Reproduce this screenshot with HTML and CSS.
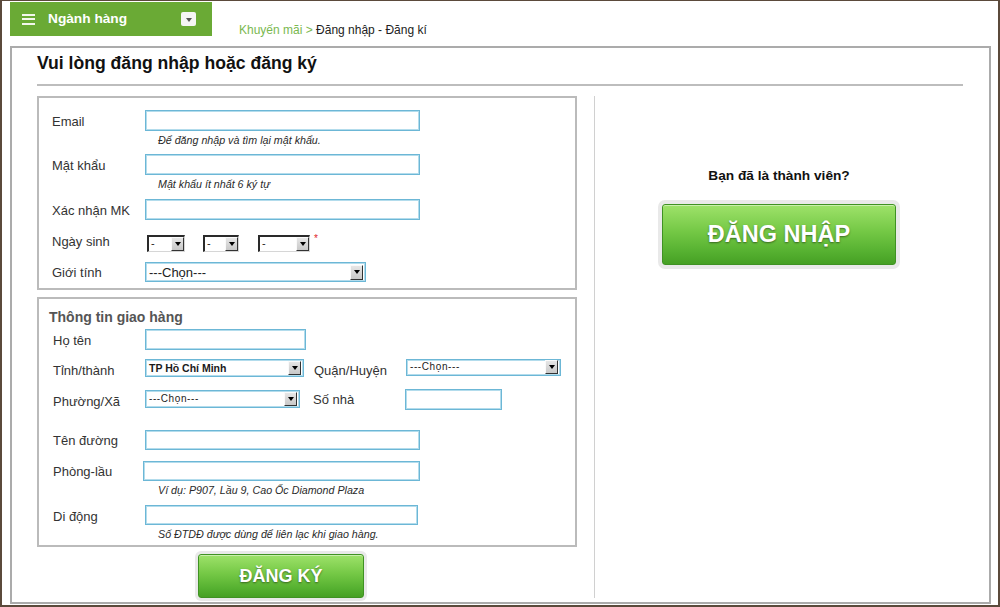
FILE: index.html
```html
<!DOCTYPE html>
<html lang="vi">
<head>
<meta charset="utf-8">
<title>Đăng nhập - Đăng kí</title>
<link rel="stylesheet" href="styles.css">
</head>
<body>
<div class="frame">
  <div class="topbar">
    <div class="cat">
      <span class="burger"><i></i><i></i><i></i></span>
      <span class="cat-title">Ngành hàng</span>
      <span class="cat-drop"></span>
    </div>
    <div class="crumb"><span class="crumb-link">Khuyến mãi &gt;</span> Đăng nhập - Đăng kí</div>
  </div>

  <div class="main">
    <h1 class="heading">Vui lòng đăng nhập hoặc đăng ký</h1>
    <div class="cols">
      <div class="left">
        <div class="box box-account">
          <div class="row">
            <label class="lbl">Email</label>
            <div class="inp w275"></div>
          </div>
          <div class="hint">Để đăng nhập và tìm lại mật khẩu.</div>
          <div class="row mt7">
            <label class="lbl">Mật khẩu</label>
            <div class="inp w275"></div>
          </div>
          <div class="hint">Mật khẩu ít nhất 6 ký tự</div>
          <div class="row mt8">
            <label class="lbl">Xác nhận MK</label>
            <div class="inp w275"></div>
          </div>
          <div class="row mt15">
            <label class="lbl lbl-up">Ngày sinh</label>
            <div class="dates">
              <div class="dsel w38"><span class="v">-</span><span class="arr"></span></div>
              <div class="dsel w36"><span class="v">-</span><span class="arr"></span></div>
              <div class="dsel w52"><span class="v">-</span><span class="arr"></span></div>
              <span class="req">*</span>
            </div>
          </div>
          <div class="row mt10">
            <label class="lbl">Giới tính</label>
            <div class="sel big w221"><span class="v">---Chọn---</span><span class="arr"></span></div>
          </div>
        </div>

        <div class="box box-ship">
          <div class="box-title">Thông tin giao hàng</div>
          <div class="row mt3">
            <label class="lbl">Họ tên</label>
            <div class="inp w161"></div>
          </div>
          <div class="row mt9 h18">
            <label class="lbl lbl-dn">Tỉnh/thành</label>
            <div class="sel small bold w159"><span class="v">TP Hồ Chí Minh</span><span class="arr"></span></div>
            <label class="lbl lbl-dn ml10">Quận/Huyện</label>
            <div class="sel small spaced w155 h17 up1"><span class="v">---Chọn---</span><span class="arr"></span></div>
          </div>
          <div class="row mt11">
            <label class="lbl lbl-dn">Phường/Xã</label>
            <div class="sel small spaced w155"><span class="v">---Chọn---</span><span class="arr"></span></div>
            <label class="lbl ml13">Số nhà</label>
            <div class="inp w97"></div>
          </div>
          <div class="row mt20">
            <label class="lbl">Tên đường</label>
            <div class="inp w275 h20"></div>
          </div>
          <div class="row mt11">
            <label class="lbl">Phòng-lầu</label>
            <div class="inp w277 h20 shift"></div>
          </div>
          <div class="hint">Ví dụ: P907, Lầu 9, Cao Ốc Diamond Plaza</div>
          <div class="row mt8">
            <label class="lbl lbl-dn1">Di động</label>
            <div class="inp w273 h20"></div>
          </div>
          <div class="hint">Số ĐTDĐ được dùng để liên lạc khi giao hàng.</div>
        </div>

        <div class="btn-wrap">
          <button class="btn btn-reg" type="button">ĐĂNG KÝ</button>
        </div>
      </div>

      <div class="right">
        <div class="member">Bạn đã là thành viên?</div>
        <button class="btn btn-login" type="button">ĐĂNG NHẬP</button>
      </div>
    </div>
  </div>
</div>
</body>
</html>
```
FILE: styles.css
```css
* { box-sizing: border-box; }
html, body { margin: 0; padding: 0; background: #fff; }
body {
  font-family: "Liberation Sans", Arial, sans-serif;
  color: #333;
}
.frame {
  width: 1000px;
  height: 607px;
  border-style: solid;
  border-color: #5b4a3b;
  border-width: 1px 2px 2px 2px;
  padding: 1px 7px 0 8px;
  overflow: hidden;
}

/* top bar */
.topbar { display: flex; height: 34px; }
.cat {
  width: 202px;
  height: 34px;
  background: #6aaa35;
  display: flex;
  align-items: center;
  padding-left: 12px;
}
.burger {
  width: 13px;
  height: 11px;
  display: flex;
  flex-direction: column;
  justify-content: space-between;
}
.burger i { display: block; height: 2px; background: #f2f7ec; }
.cat-title {
  margin-left: 13px;
  color: #fff;
  font-weight: bold;
  font-size: 13.7px;
  line-height: 16px;
}
.cat-drop {
  margin-left: 54px;
  width: 15px;
  height: 14px;
  background: #f5f5f5;
  border-radius: 2px;
  display: flex;
  align-items: center;
  justify-content: center;
}
.cat-drop::after {
  content: "";
  border-left: 3.5px solid transparent;
  border-right: 3.5px solid transparent;
  border-top: 4px solid #555;
  margin-top: 1px;
}
.crumb {
  margin-left: 27px;
  padding-top: 21px;
  font-size: 12px;
  line-height: 14px;
  color: #222;
}
.crumb-link { color: #7ab84f; }

/* main box */
.main {
  margin-top: 10px;
  height: 558px;
  border: 2px solid #ababab;
  padding: 4px 26px 0 25px;
}
.heading {
  margin: 0;
  font-size: 17.6px;
  line-height: 22px;
  font-weight: bold;
  color: #111;
  padding-bottom: 10px;
  border-bottom: 2px solid #bdbdbd;
}
.cols { display: flex; margin-top: 10px; }
.left { width: 540px; display: flex; flex-direction: column; }
.right {
  margin-left: 17px;
  width: 369px;
  height: 502px;
  border-left: 1px solid #d0d0d0;
  display: flex;
  flex-direction: column;
  align-items: center;
}

.box { border: 2px solid #bbbbbb; }
.box-account { height: 194px; padding: 12px 0 0 13px; }
.box-ship { height: 250px; margin-top: 7px; padding: 9px 0 0 14px; }
.box-title {
  margin-left: -4px;
  font-size: 14px;
  line-height: 18px;
  font-weight: bold;
  color: #555;
}

.row { display: flex; align-items: center; }
.h18 { height: 18px; }
.lbl {
  width: 93px;
  font-size: 13px;
  line-height: 16px;
  color: #333;
  flex: none;
  margin-top: 2px;
}
.box-ship .lbl { width: 92px; }
.lbl-up { margin-top: -4px; }
.box-ship .lbl-dn { margin-top: 6px; }
.box-ship .lbl-dn1 { margin-top: 4px; }
.ml10 { margin-left: 10px; }
.ml13 { margin-left: 13px; }
.up1 { position: relative; top: -1px; }
.mt3 { margin-top: 3px; }
.mt7 { margin-top: 7px; }
.mt8 { margin-top: 8px; }
.mt9 { margin-top: 9px; }
.mt10 { margin-top: 10px; }
.mt11 { margin-top: 11px; }
.mt15 { margin-top: 15px; }
.mt20 { margin-top: 20px; }

.inp {
  height: 21px;
  border: 1px solid #6cb7d6;
  box-shadow: inset 0 0 0 1px #b3dcec;
  background: #fff;
  flex: none;
}
.h20 { height: 20px; }
.shift { margin-left: -2px; }
.w275 { width: 275px; }
.w277 { width: 277px; }
.w273 { width: 273px; }
.w161 { width: 161px; }
.w97 { width: 97px; }
.w221 { width: 221px; }
.w159 { width: 159px; }
.w155 { width: 155px; }
.w38 { width: 38px; }
.w36 { width: 36px; }
.w52 { width: 52px; }

.hint {
  margin: 3px 0 0 106px;
  font-size: 10.7px;
  line-height: 13px;
  font-style: italic;
  color: #2a2a2a;
}
.box-ship .hint { margin-left: 105px; }

/* date selects */
.dates { display: flex; align-items: flex-start; margin-left: 2px; }
.dsel {
  height: 17px;
  display: flex;
  border-style: solid;
  border-width: 2px 1px 1px 2px;
  border-color: #2a2a2a #d6d6d6 #d6d6d6 #2a2a2a;
  background: #fff;
  margin-right: 18px;
}
.dsel + .dsel + .dsel { margin-right: 4px; }
.dsel:nth-child(2) { margin-right: 19px; }
.dsel .v { flex: 1; font-size: 11px; line-height: 13px; padding-left: 2px; color: #222; }
.req { color: #e0242a; font-size: 10px; line-height: 10px; margin-top: -1px; }

/* generic select */
.sel {
  height: 18px;
  display: flex;
  align-items: center;
  border: 1px solid #6cb7d6;
  box-shadow: inset 0 0 0 1px #b3dcec;
  background: #fff;
  padding: 2px 2px 2px 3px;
  flex: none;
}
.sel.big { height: 20px; }
.h17 { height: 17px !important; }
.sel .v { flex: 1; color: #222; white-space: nowrap; }
.sel.big .v { font-size: 13px; line-height: 15px; }
.sel.small .v { font-size: 10px; line-height: 12px; }
.sel.bold .v { font-weight: bold; font-size: 10.5px; color: #1a1a1a; }
.sel.spaced .v { letter-spacing: 0.6px; }

.arr {
  width: 13px;
  height: 100%;
  flex: none;
  background: linear-gradient(#e6e6e6, #c8c8c8);
  border: 1px solid;
  border-color: #fafafa #333 #333 #fafafa;
  display: flex;
  align-items: center;
  justify-content: center;
}
.sel .arr { height: 14px; }
.sel.big .arr { height: 15px; }
.arr::after {
  content: "";
  border-left: 3.5px solid transparent;
  border-right: 3.5px solid transparent;
  border-top: 4px solid #000;
}

/* buttons */
.btn {
  font-family: "Liberation Sans", Arial, sans-serif;
  font-weight: bold;
  color: #fff;
  text-shadow: 0 1px 2px rgba(0,0,0,0.45);
  border: 1px solid #3f9223;
  border-radius: 3px;
  background: linear-gradient(#9ee26a 0%, #74c845 45%, #55b030 80%, #46a024 100%);
  box-shadow: 0 0 0 3px #e9e9e9, inset 0 1px 0 rgba(255,255,255,0.45);
  padding: 0;
  cursor: pointer;
}
.btn-wrap { margin-top: 7px; padding-left: 161px; }
.btn-reg {
  width: 166px;
  height: 44px;
  font-size: 18px;
}
.member {
  margin-top: 72px;
  font-size: 13.7px;
  line-height: 16px;
  font-weight: bold;
  color: #111;
}
.btn-login {
  margin-top: 20px;
  width: 234px;
  height: 61px;
  font-size: 23.5px;
  box-shadow: 0 0 0 4px #e9e9e9, inset 0 1px 0 rgba(255,255,255,0.45);
}
```
